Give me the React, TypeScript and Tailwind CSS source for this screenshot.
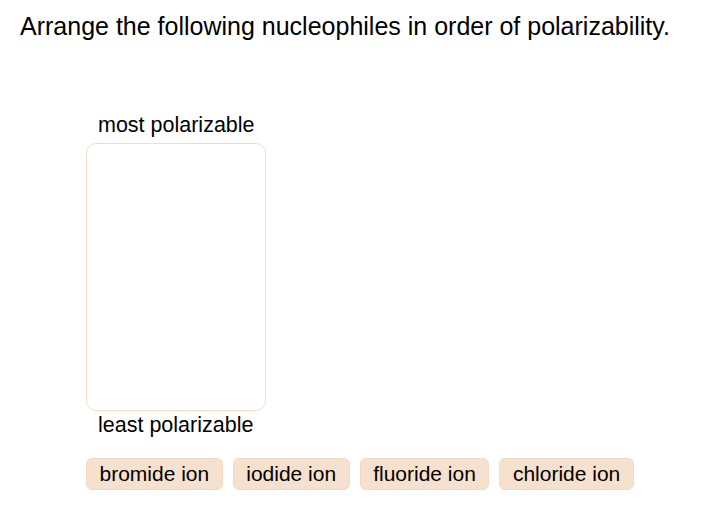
const chips = ["bromide ion", "iodide ion", "fluoride ion", "chloride ion"];

export default function App() {
  return (
    <div
      className="w-[716px] h-[520px] bg-white text-black"
      style={{ fontFamily: '"Liberation Sans", Arial, sans-serif' }}
    >
      <h1 className="pl-[20px] pt-[11px] text-[25px] leading-[30px] font-normal">
        Arrange the following nucleophiles in order of polarizability.
      </h1>
      <div className="pl-[86px] pt-[72px]">
        <div className="pl-[12px] text-[21.5px] leading-[24px]">most polarizable</div>
        <div className="mt-[6px] w-[180px] h-[268px] rounded-[10px] border border-[#efdfca]" />
        <div className="mt-[2px] pl-[12px] text-[21.5px] leading-[24px]">least polarizable</div>
        <div className="mt-[21px] flex gap-[10px]">
          {chips.map((c) => (
            <div
              key={c}
              className="h-[32px] px-[12.5px] flex items-center rounded-[6px] bg-[#f5e1cd] border border-[#f0dac3] text-[21px] leading-[24px]"
            >
              {c}
            </div>
          ))}
        </div>
      </div>
    </div>
  );
}
